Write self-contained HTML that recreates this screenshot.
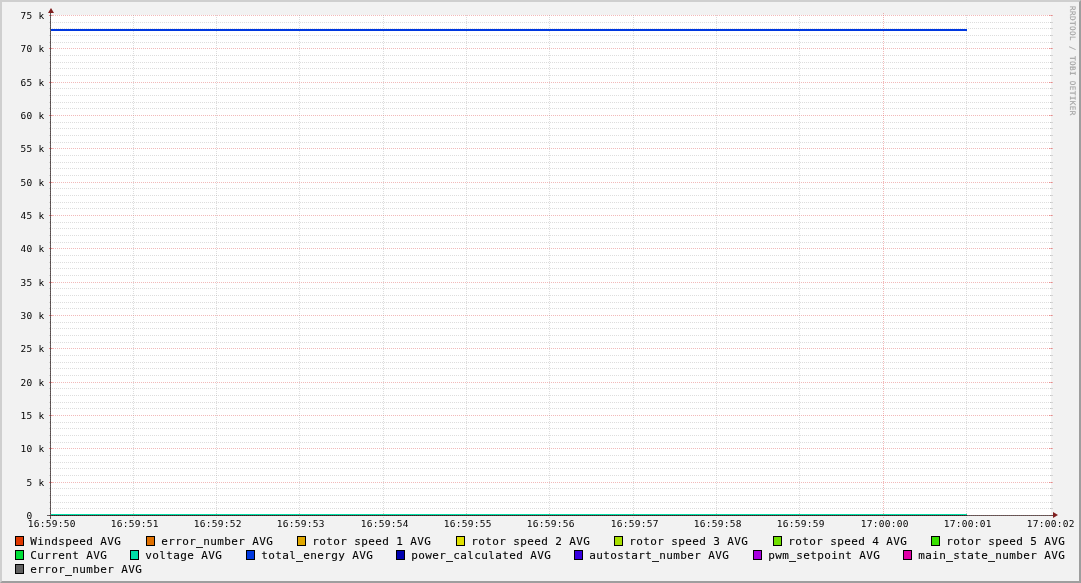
<!DOCTYPE html>
<html lang="en">
<head>
<meta charset="utf-8">
<title>RRDtool graph</title>
<style>
html,body{margin:0;padding:0;background:#f2f2f2;}
body{width:1081px;height:583px;overflow:hidden;position:relative;font-family:"DejaVu Sans Mono","Liberation Mono",monospace;color:#000;}
#txt{position:absolute;left:0;top:0;width:1081px;height:583px;will-change:transform;}
#frame{position:absolute;left:0;top:0;width:1077px;height:579px;border-style:solid;border-width:2px;border-color:#cfcfcf #9e9e9e #9e9e9e #cfcfcf;background:#f2f2f2;}
#g{position:absolute;left:0;top:0;}
.t{position:absolute;white-space:pre;line-height:1;margin:0;padding:0;}
.ax{font-size:9.5px;letter-spacing:0.281px;}
.lg{font-size:11px;letter-spacing:0.378px;-webkit-text-stroke:0.1px #000;}
.us{position:absolute;width:7px;height:1px;background:rgba(0,0,0,0.75);}
.bx{position:absolute;width:7px;height:8px;border:1px solid #000;}
#wm{position:absolute;left:1076px;top:6px;font-size:7.64px;letter-spacing:0.4px;color:#a2a2a2;-webkit-text-stroke:0.12px #a2a2a2;white-space:pre;line-height:1;transform-origin:0 0;transform:rotate(90deg);}

</style>
</head>
<body>
<div id="frame"></div>
<svg id="g" width="1081" height="583" viewBox="0 0 1081 583" shape-rendering="crispEdges">
<rect x="51" y="15" width="1000" height="500" fill="#fff"/>
<path d="M50 508.5H1053M50 502.5H1053M50 495.5H1053M50 488.5H1053M50 475.5H1053M50 468.5H1053M50 462.5H1053M50 455.5H1053M50 442.5H1053M50 435.5H1053M50 428.5H1053M50 422.5H1053M50 408.5H1053M50 402.5H1053M50 395.5H1053M50 388.5H1053M50 375.5H1053M50 368.5H1053M50 362.5H1053M50 355.5H1053M50 342.5H1053M50 335.5H1053M50 328.5H1053M50 322.5H1053M50 308.5H1053M50 302.5H1053M50 295.5H1053M50 288.5H1053M50 275.5H1053M50 268.5H1053M50 262.5H1053M50 255.5H1053M50 242.5H1053M50 235.5H1053M50 228.5H1053M50 222.5H1053M50 208.5H1053M50 202.5H1053M50 195.5H1053M50 188.5H1053M50 175.5H1053M50 168.5H1053M50 162.5H1053M50 155.5H1053M50 142.5H1053M50 135.5H1053M50 128.5H1053M50 122.5H1053M50 108.5H1053M50 102.5H1053M50 95.5H1053M50 88.5H1053M50 75.5H1053M50 68.5H1053M50 62.5H1053M50 55.5H1053M50 42.5H1053M50 35.5H1053M50 28.5H1053M50 22.5H1053" stroke="rgba(143,143,143,0.30)" stroke-width="1" stroke-dasharray="1 1" fill="none"/>
<path d="M49 515.5H1053M49 482.5H1053M49 448.5H1053M49 415.5H1053M49 382.5H1053M49 348.5H1053M49 315.5H1053M49 282.5H1053M49 248.5H1053M49 215.5H1053M49 182.5H1053M49 148.5H1053M49 115.5H1053M49 82.5H1053M49 48.5H1053M49 15.5H1053" stroke="rgba(222,79,79,0.40)" stroke-width="1" stroke-dasharray="1 1" fill="none"/>
<path d="M49 508h2v1h-2zM1050 508h2v1h-2zM49 502h2v1h-2zM1050 502h2v1h-2zM49 495h2v1h-2zM1050 495h2v1h-2zM49 488h2v1h-2zM1050 488h2v1h-2zM49 475h2v1h-2zM1050 475h2v1h-2zM49 468h2v1h-2zM1050 468h2v1h-2zM49 462h2v1h-2zM1050 462h2v1h-2zM49 455h2v1h-2zM1050 455h2v1h-2zM49 442h2v1h-2zM1050 442h2v1h-2zM49 435h2v1h-2zM1050 435h2v1h-2zM49 428h2v1h-2zM1050 428h2v1h-2zM49 422h2v1h-2zM1050 422h2v1h-2zM49 408h2v1h-2zM1050 408h2v1h-2zM49 402h2v1h-2zM1050 402h2v1h-2zM49 395h2v1h-2zM1050 395h2v1h-2zM49 388h2v1h-2zM1050 388h2v1h-2zM49 375h2v1h-2zM1050 375h2v1h-2zM49 368h2v1h-2zM1050 368h2v1h-2zM49 362h2v1h-2zM1050 362h2v1h-2zM49 355h2v1h-2zM1050 355h2v1h-2zM49 342h2v1h-2zM1050 342h2v1h-2zM49 335h2v1h-2zM1050 335h2v1h-2zM49 328h2v1h-2zM1050 328h2v1h-2zM49 322h2v1h-2zM1050 322h2v1h-2zM49 308h2v1h-2zM1050 308h2v1h-2zM49 302h2v1h-2zM1050 302h2v1h-2zM49 295h2v1h-2zM1050 295h2v1h-2zM49 288h2v1h-2zM1050 288h2v1h-2zM49 275h2v1h-2zM1050 275h2v1h-2zM49 268h2v1h-2zM1050 268h2v1h-2zM49 262h2v1h-2zM1050 262h2v1h-2zM49 255h2v1h-2zM1050 255h2v1h-2zM49 242h2v1h-2zM1050 242h2v1h-2zM49 235h2v1h-2zM1050 235h2v1h-2zM49 228h2v1h-2zM1050 228h2v1h-2zM49 222h2v1h-2zM1050 222h2v1h-2zM49 208h2v1h-2zM1050 208h2v1h-2zM49 202h2v1h-2zM1050 202h2v1h-2zM49 195h2v1h-2zM1050 195h2v1h-2zM49 188h2v1h-2zM1050 188h2v1h-2zM49 175h2v1h-2zM1050 175h2v1h-2zM49 168h2v1h-2zM1050 168h2v1h-2zM49 162h2v1h-2zM1050 162h2v1h-2zM49 155h2v1h-2zM1050 155h2v1h-2zM49 142h2v1h-2zM1050 142h2v1h-2zM49 135h2v1h-2zM1050 135h2v1h-2zM49 128h2v1h-2zM1050 128h2v1h-2zM49 122h2v1h-2zM1050 122h2v1h-2zM49 108h2v1h-2zM1050 108h2v1h-2zM49 102h2v1h-2zM1050 102h2v1h-2zM49 95h2v1h-2zM1050 95h2v1h-2zM49 88h2v1h-2zM1050 88h2v1h-2zM49 75h2v1h-2zM1050 75h2v1h-2zM49 68h2v1h-2zM1050 68h2v1h-2zM49 62h2v1h-2zM1050 62h2v1h-2zM49 55h2v1h-2zM1050 55h2v1h-2zM49 42h2v1h-2zM1050 42h2v1h-2zM49 35h2v1h-2zM1050 35h2v1h-2zM49 28h2v1h-2zM1050 28h2v1h-2zM49 22h2v1h-2zM1050 22h2v1h-2z" fill="rgba(143,143,143,0.30)"/>
<path d="M49 515h4v1h-4zM1049 515h4v1h-4zM49 482h4v1h-4zM1049 482h4v1h-4zM49 448h4v1h-4zM1049 448h4v1h-4zM49 415h4v1h-4zM1049 415h4v1h-4zM49 382h4v1h-4zM1049 382h4v1h-4zM49 348h4v1h-4zM1049 348h4v1h-4zM49 315h4v1h-4zM1049 315h4v1h-4zM49 282h4v1h-4zM1049 282h4v1h-4zM49 248h4v1h-4zM1049 248h4v1h-4zM49 215h4v1h-4zM1049 215h4v1h-4zM49 182h4v1h-4zM1049 182h4v1h-4zM49 148h4v1h-4zM1049 148h4v1h-4zM49 115h4v1h-4zM1049 115h4v1h-4zM49 82h4v1h-4zM1049 82h4v1h-4zM49 48h4v1h-4zM1049 48h4v1h-4zM49 15h4v1h-4zM1049 15h4v1h-4z" fill="rgba(222,79,79,0.40)"/>
<path d="M50.5 518V14M133.5 518V14M216.5 518V14M299.5 518V14M383.5 518V14M466.5 518V14M549.5 518V14M633.5 518V14M716.5 518V14M799.5 518V14M966.5 518V14" stroke="rgba(143,143,143,0.30)" stroke-width="1" stroke-dasharray="1 1" fill="none"/>
<path d="M883.5 518V13" stroke="rgba(222,79,79,0.40)" stroke-width="1" stroke-dasharray="1 1" fill="none"/>
<path d="M50 513h1v1h-1zM133 513h1v1h-1zM216 513h1v1h-1zM299 513h1v1h-1zM383 513h1v1h-1zM466 513h1v1h-1zM549 513h1v1h-1zM633 513h1v1h-1zM716 513h1v1h-1zM799 513h1v1h-1zM883 513h1v1h-1zM966 513h1v1h-1z" fill="rgba(222,79,79,0.25)"/>
<path d="M50.5 518V13" stroke="rgba(222,79,79,0.40)" stroke-width="1" stroke-dasharray="1 1" fill="none"/>
<rect x="51" y="29" width="916" height="2" fill="#0038E0"/>
<rect x="51" y="514" width="916" height="2" fill="#00E0A8"/>
<rect x="47" y="515" width="1008" height="1" fill="rgba(31,31,31,0.67)"/>
<rect x="50" y="11" width="1" height="508" fill="rgba(31,31,31,0.67)"/>
<rect x="51" y="515" width="916" height="1" fill="rgb(35,45,40)"/>
<path d="M51 515.5H967" stroke="rgb(91,52,52)" stroke-width="1" stroke-dasharray="1 1" fill="none"/>
<path d="M967 515.5H1053" stroke="rgb(112,74,74)" stroke-width="1" stroke-dasharray="1 1" fill="none"/>
<path shape-rendering="geometricPrecision" d="M1053 512L1053 518L1058 515Z" fill="#801f1f"/>
<path shape-rendering="geometricPrecision" d="M48 13L54 13L51 8Z" fill="#801f1f"/>
</svg>
<div id="txt">
<div class="t ax" style="left:26.5px;top:510.96px">0</div>
<div class="t ax" style="left:26.5px;top:477.96px">5 k</div>
<div class="t ax" style="left:20.5px;top:443.96px">10 k</div>
<div class="t ax" style="left:20.5px;top:410.96px">15 k</div>
<div class="t ax" style="left:20.5px;top:377.96px">20 k</div>
<div class="t ax" style="left:20.5px;top:343.96px">25 k</div>
<div class="t ax" style="left:20.5px;top:310.96px">30 k</div>
<div class="t ax" style="left:20.5px;top:277.96px">35 k</div>
<div class="t ax" style="left:20.5px;top:243.96px">40 k</div>
<div class="t ax" style="left:20.5px;top:210.96px">45 k</div>
<div class="t ax" style="left:20.5px;top:177.96px">50 k</div>
<div class="t ax" style="left:20.5px;top:143.96px">55 k</div>
<div class="t ax" style="left:20.5px;top:110.96px">60 k</div>
<div class="t ax" style="left:20.5px;top:77.96px">65 k</div>
<div class="t ax" style="left:20.5px;top:43.96px">70 k</div>
<div class="t ax" style="left:20.5px;top:10.96px">75 k</div>
<div class="t ax" style="left:27.8px;top:518.96px">16:59:50</div>
<div class="t ax" style="left:110.8px;top:518.96px">16:59:51</div>
<div class="t ax" style="left:193.8px;top:518.96px">16:59:52</div>
<div class="t ax" style="left:276.8px;top:518.96px">16:59:53</div>
<div class="t ax" style="left:360.8px;top:518.96px">16:59:54</div>
<div class="t ax" style="left:443.8px;top:518.96px">16:59:55</div>
<div class="t ax" style="left:526.8px;top:518.96px">16:59:56</div>
<div class="t ax" style="left:610.8px;top:518.96px">16:59:57</div>
<div class="t ax" style="left:693.8px;top:518.96px">16:59:58</div>
<div class="t ax" style="left:776.8px;top:518.96px">16:59:59</div>
<div class="t ax" style="left:860.8px;top:518.96px">17:00:00</div>
<div class="t ax" style="left:943.8px;top:518.96px">17:00:01</div>
<div class="t ax" style="left:1026.8px;top:518.96px">17:00:02</div>
<div class="bx" style="left:15px;top:536px;background:#E03800"></div>
<div class="t lg" style="left:30.2px;top:535.69px">Windspeed AVG</div>
<div class="bx" style="left:146px;top:536px;background:#E07000"></div>
<div class="t lg" style="left:161.2px;top:535.69px">error_number AVG</div>
<div class="us" style="left:196px;top:547px"></div>
<div class="bx" style="left:297px;top:536px;background:#E0A800"></div>
<div class="t lg" style="left:312.2px;top:535.69px">rotor speed 1 AVG</div>
<div class="bx" style="left:456px;top:536px;background:#E0E000"></div>
<div class="t lg" style="left:471.2px;top:535.69px">rotor speed 2 AVG</div>
<div class="bx" style="left:614px;top:536px;background:#A8E000"></div>
<div class="t lg" style="left:629.2px;top:535.69px">rotor speed 3 AVG</div>
<div class="bx" style="left:773px;top:536px;background:#70E000"></div>
<div class="t lg" style="left:788.2px;top:535.69px">rotor speed 4 AVG</div>
<div class="bx" style="left:931px;top:536px;background:#38E000"></div>
<div class="t lg" style="left:946.2px;top:535.69px">rotor speed 5 AVG</div>
<div class="bx" style="left:15px;top:550px;background:#00E038"></div>
<div class="t lg" style="left:30.2px;top:549.69px">Current AVG</div>
<div class="bx" style="left:130px;top:550px;background:#00E0A8"></div>
<div class="t lg" style="left:145.2px;top:549.69px">voltage AVG</div>
<div class="bx" style="left:246px;top:550px;background:#0038E0"></div>
<div class="t lg" style="left:261.2px;top:549.69px">total_energy AVG</div>
<div class="us" style="left:296px;top:561px"></div>
<div class="bx" style="left:396px;top:550px;background:#0000B0"></div>
<div class="t lg" style="left:411.2px;top:549.69px">power_calculated AVG</div>
<div class="us" style="left:446px;top:561px"></div>
<div class="bx" style="left:574px;top:550px;background:#3800E0"></div>
<div class="t lg" style="left:589.2px;top:549.69px">autostart_number AVG</div>
<div class="us" style="left:652px;top:561px"></div>
<div class="bx" style="left:753px;top:550px;background:#A800E0"></div>
<div class="t lg" style="left:768.2px;top:549.69px">pwm_setpoint AVG</div>
<div class="us" style="left:789px;top:561px"></div>
<div class="bx" style="left:903px;top:550px;background:#E000A8"></div>
<div class="t lg" style="left:918.2px;top:549.69px">main_state_number AVG</div>
<div class="us" style="left:946px;top:561px"></div>
<div class="us" style="left:988px;top:561px"></div>
<div class="bx" style="left:15px;top:564px;background:#606060"></div>
<div class="t lg" style="left:30.2px;top:563.69px">error_number AVG</div>
<div class="us" style="left:65px;top:575px"></div>
<div id="wm">RRDTOOL / TOBI OETIKER</div>
</div>
</body>
</html>
